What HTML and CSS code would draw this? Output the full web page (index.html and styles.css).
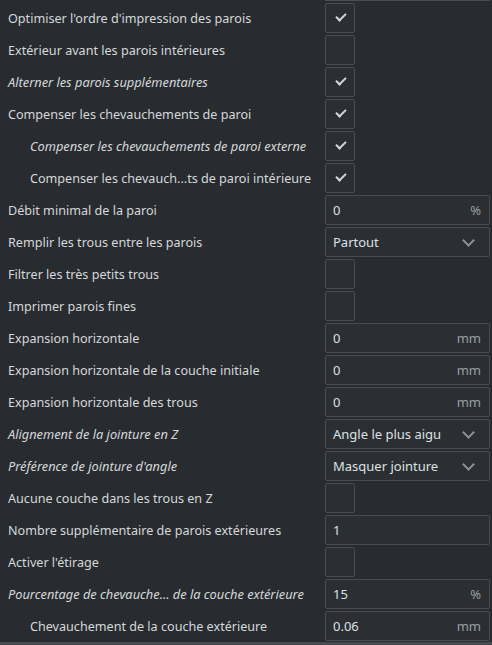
FILE: index.html
```html
<!DOCTYPE html>
<html lang="fr">
<head>
<meta charset="utf-8">
<link rel="stylesheet" href="styles.css">
</head>
<body>
<div class="panel">
  <div class="topedge"><div class="topedge-box"></div></div>
  <div class="rows">
    <div class="row"><span class="label">Optimiser l'ordre d'impression des parois</span><span class="check on"></span></div>
    <div class="row"><span class="label">Extérieur avant les parois intérieures</span><span class="check"></span></div>
    <div class="row"><span class="label it">Alterner les parois supplémentaires</span><span class="check on"></span></div>
    <div class="row"><span class="label">Compenser les chevauchements de paroi</span><span class="check on"></span></div>
    <div class="row"><span class="label it sub">Compenser les chevauchements de paroi externe</span><span class="check on"></span></div>
    <div class="row"><span class="label sub">Compenser les chevauch...ts de paroi intérieure</span><span class="check on"></span></div>
    <div class="row"><span class="label">Débit minimal de la paroi</span><span class="field"><span class="val">0</span><span class="unit">%</span></span></div>
    <div class="row"><span class="label">Remplir les trous entre les parois</span><span class="field"><span class="val">Partout</span><span class="chev"></span></span></div>
    <div class="row"><span class="label">Filtrer les très petits trous</span><span class="check"></span></div>
    <div class="row"><span class="label">Imprimer parois fines</span><span class="check"></span></div>
    <div class="row"><span class="label">Expansion horizontale</span><span class="field"><span class="val">0</span><span class="unit">mm</span></span></div>
    <div class="row"><span class="label">Expansion horizontale de la couche initiale</span><span class="field"><span class="val">0</span><span class="unit">mm</span></span></div>
    <div class="row"><span class="label">Expansion horizontale des trous</span><span class="field"><span class="val">0</span><span class="unit">mm</span></span></div>
    <div class="row"><span class="label it">Alignement de la jointure en Z</span><span class="field"><span class="val">Angle le plus aigu</span><span class="chev"></span></span></div>
    <div class="row"><span class="label it">Préférence de jointure d'angle</span><span class="field"><span class="val">Masquer jointure</span><span class="chev"></span></span></div>
    <div class="row"><span class="label">Aucune couche dans les trous en Z</span><span class="check"></span></div>
    <div class="row"><span class="label">Nombre supplémentaire de parois extérieures</span><span class="field"><span class="val">1</span></span></div>
    <div class="row"><span class="label">Activer l'étirage</span><span class="check"></span></div>
    <div class="row"><span class="label it">Pourcentage de chevauche... de la couche extérieure</span><span class="field"><span class="val">15</span><span class="unit">%</span></span></div>
    <div class="row"><span class="label sub">Chevauchement de la couche extérieure</span><span class="field"><span class="val">0.06</span><span class="unit">mm</span></span></div>
  </div>
  <div class="bottombar"></div>
</div>
</body>
</html>
```
FILE: styles.css
```css
html, body {
  margin: 0;
  padding: 0;
  background: #282c30;
}
.panel {
  width: 492px;
  height: 645px;
  overflow: hidden;
  position: relative;
  background: #282c30;
  font-family: "Noto Sans", "Open Sans", sans-serif;
  font-size: 12.6px;
  color: #d6d8da;
}
.topedge {
  height: 3px;
  padding-left: 325px;
  padding-right: 2px;
}
.topedge-box {
  height: 0;
  border-top: 1px solid #4a4e52;
}
.rows {
  display: flex;
  flex-direction: column;
  gap: 2px;
}
.row {
  display: grid;
  grid-template-columns: 317px 165px;
  align-items: center;
  height: 30px;
  padding-left: 8px;
}
.label {
  white-space: nowrap;
}
.label.it {
  font-style: italic;
  font-size: 12.8px;
}
.label.sub {
  padding-left: 22px;
}
.check {
  box-sizing: border-box;
  width: 30px;
  height: 30px;
  border: 1px solid #494d51;
  border-radius: 2px;
  background: #2b2f33;
  position: relative;
}
.check.on::after {
  content: "";
  position: absolute;
  left: 10px;
  top: 9px;
  width: 8px;
  height: 4px;
  border-left: 2px solid #d4d6d8;
  border-bottom: 2px solid #d4d6d8;
  transform: rotate(-45deg);
  transform-origin: center;
}
.field {
  box-sizing: border-box;
  height: 30px;
  border: 1px solid #494d51;
  border-radius: 2px;
  background: #2b2f33;
  display: flex;
  align-items: center;
  justify-content: space-between;
  padding: 0 8px 0 7px;
}
.val {
  color: #dde0e3;
  font-size: 13px;
}
.unit {
  color: #9b9fa3;
  font-size: 13px;
}
.chev {
  width: 7px;
  height: 7px;
  border-right: 2px solid #8d9195;
  border-bottom: 2px solid #8d9195;
  transform: rotate(45deg);
  margin-right: 8px;
  margin-top: -4px;
}
.bottombar {
  position: absolute;
  left: 0;
  right: 0;
  bottom: 0;
  height: 3px;
  background: #474b4f;
}
```
